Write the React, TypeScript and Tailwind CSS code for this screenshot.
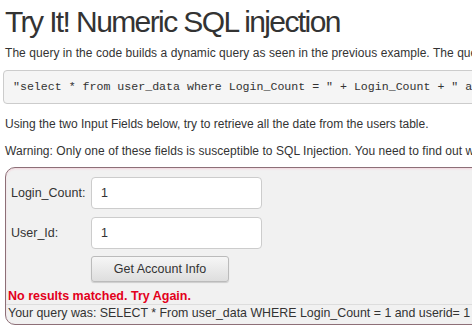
import { useState } from "react";

export default function App() {
  const [loginCount, setLoginCount] = useState("1");
  const [userId, setUserId] = useState("1");

  return (
    <div className="w-[472px] h-[333px] overflow-hidden bg-white text-[#333] font-['Liberation_Sans',Arial,sans-serif]">
      <div className="w-[900px] pl-[5px]">
        <h2 className="text-[30px] leading-[33px] font-normal pt-[5px] tracking-[-1.6px] text-[#333]">
          Try It! Numeric SQL injection
        </h2>
        <p className="text-[12px] leading-[18px] mt-[6px] tracking-[0.05px]">
          The query in the code builds a dynamic query as seen in the previous example. The query in the code builds a dynamic query
        </p>

        <pre className="mt-[8px] -ml-[2px] rounded-[4px] border border-[#ccc] bg-[#f5f5f5] px-[9px] py-[8px] text-[11.6px] leading-[16px] text-[#333] font-['Liberation_Mono','Courier_New',monospace]">
          "select * from user_data where Login_Count = " + Login_Count + " and userid= "  + User_ID;
        </pre>

        <p className="text-[12px] leading-[18px] mt-[11px]">
          Using the two Input Fields below, try to retrieve all the date from the users table.
        </p>
        <p className="text-[12px] leading-[18px] mt-[9px] tracking-[0.05px]">
          Warning: Only one of these fields is susceptible to SQL Injection. You need to find out which, to successfully retrieve all the data.
        </p>

        <div className="mt-[7px] rounded-[10px] border border-[#8d6f77] bg-[#f1f1f1] shadow-[inset_0_1px_2px_#f3d6dd] pt-[9px] pb-[2px]">
          <form
            className="flex flex-col gap-[8px]"
            onSubmit={(e) => e.preventDefault()}
          >
            <div className="flex items-center">
              <label className="w-[85px] pl-[5px] text-[12.5px]">Login_Count:</label>
              <input
                value={loginCount}
                onChange={(e) => setLoginCount(e.target.value)}
                className="w-[171px] h-[32px] rounded-[4px] border border-[#ccc] bg-white px-[9px] text-[12.5px] text-[#333] outline-none"
              />
            </div>
            <div className="flex items-center">
              <label className="w-[85px] pl-[5px] text-[12.5px]">User_Id:</label>
              <input
                value={userId}
                onChange={(e) => setUserId(e.target.value)}
                className="w-[171px] h-[32px] rounded-[4px] border border-[#ccc] bg-white px-[9px] text-[12.5px] text-[#333] outline-none"
              />
            </div>
            <div className="flex">
              <div className="w-[85px]" />
              <button
                type="submit"
                className="w-[138px] h-[26px] -mt-[1px] rounded-[3px] border border-[#bbb] bg-[linear-gradient(#f6f6f6,#dedede)] shadow-[0_1px_1px_rgba(0,0,0,0.15)] text-[12.5px] text-[#333]"
              >
                Get Account Info
              </button>
            </div>
          </form>

          <div className="mt-[6px] pl-[2px] text-[12.5px] leading-[16px] font-bold text-[#e3001b]">
            No results matched. Try Again.
          </div>
          <div className="border-t border-[#ddd] pl-[2px] text-[12.4px] leading-[17px]">
            Your query was: SELECT * From user_data WHERE Login_Count = 1 and userid= 1
          </div>
        </div>
      </div>
    </div>
  );
}
